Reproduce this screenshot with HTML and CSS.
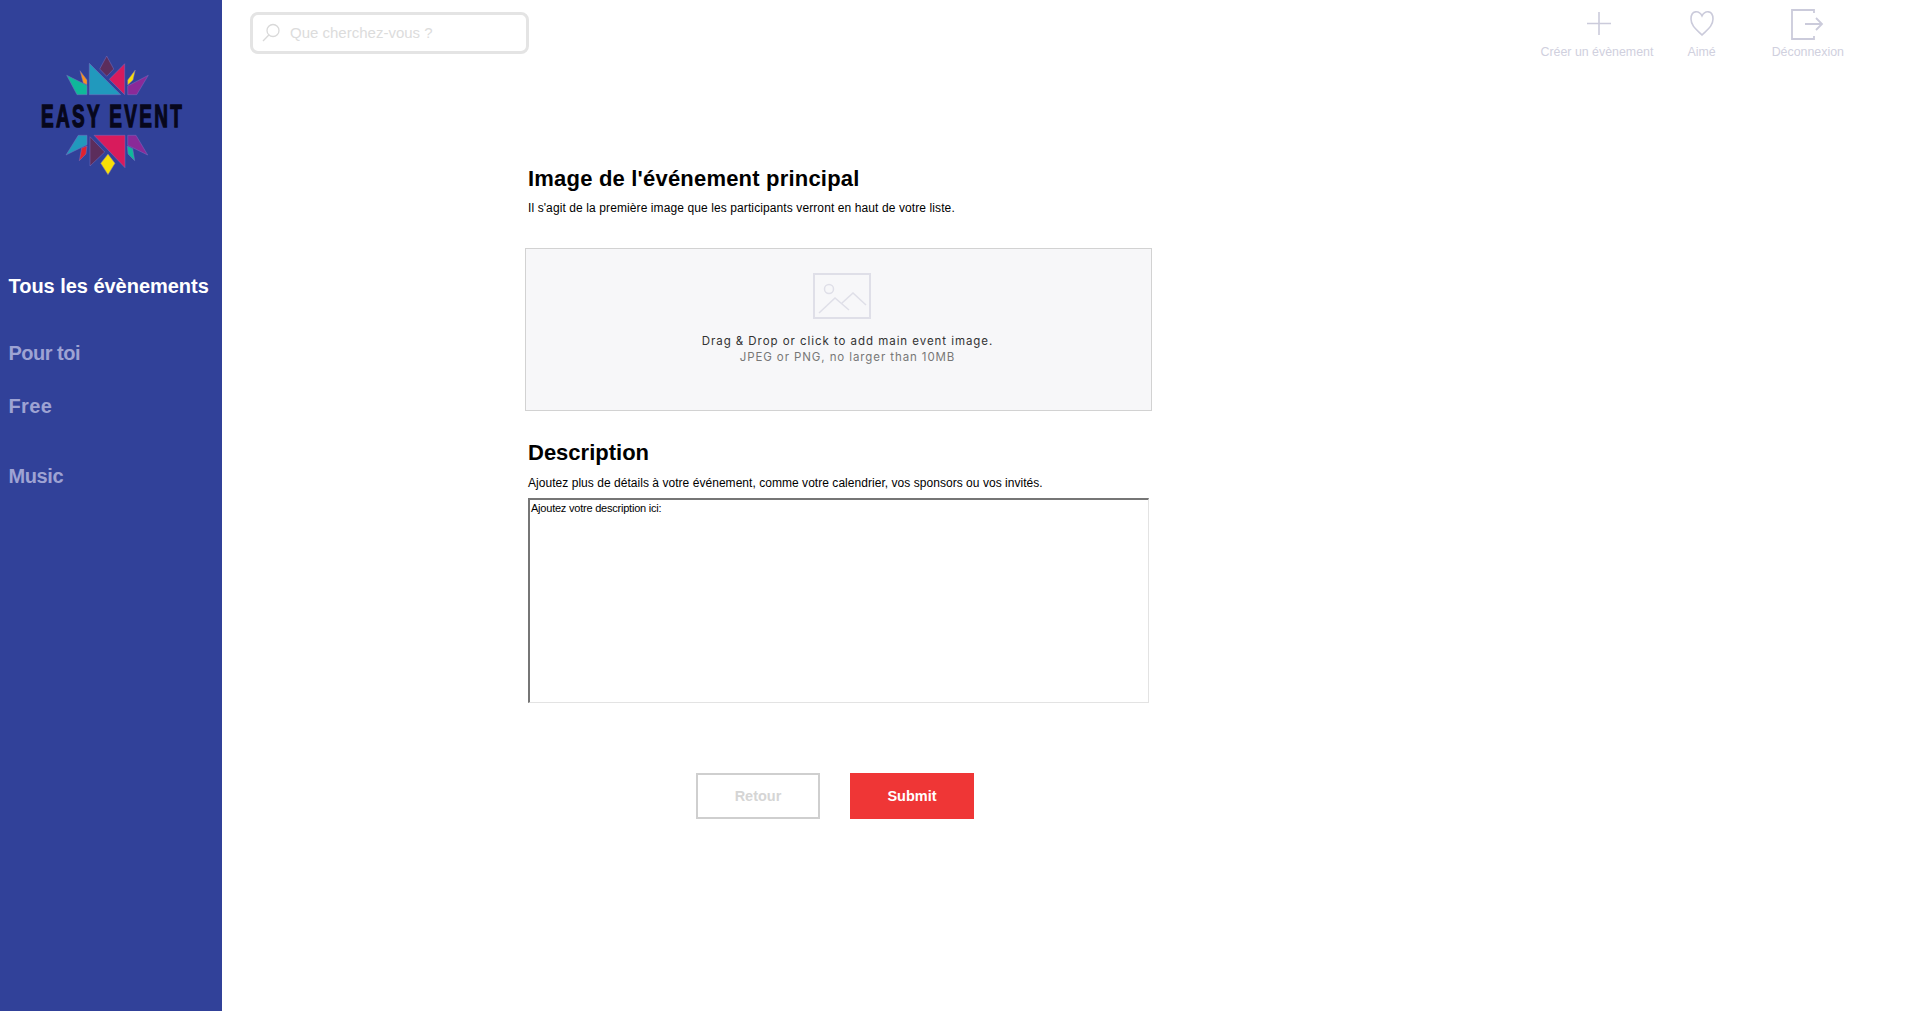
FILE: index.html
```html
<!DOCTYPE html>
<html lang="fr">
<head>
    <meta charset="UTF-8">
    <meta name="viewport" content="width=device-width, initial-scale=1.0">
    <title>Easy Event</title>
    <link rel="stylesheet" href="styles.css">
</head>
<body>
    <aside class="sidebar">
        <svg class="logo" width="222" height="190" viewBox="0 0 222 190">
            <polygon fill="#5c2d5c" points="106.7,56 113.7,69 106.7,76.3 99.7,69"/>
            <polygon fill="#2199bd" points="89.3,63.3 120.7,94.7 89.3,94.7"/>
            <polygon fill="#d81b5c" points="124.7,63.7 124.7,94.7 109.3,79.3"/>
            <polygon fill="#0fb89a" points="66.7,75.3 87,85.3 87,94.7 77,94.7"/>
            <polygon fill="#f7931e" points="80,70.7 87,80 87,84.7 83.3,83"/>
            <polygon fill="#f8e007" points="135.3,70 127.7,80 127.7,85 133,80"/>
            <polygon fill="#8a2a98" points="148.3,75.3 127.7,86 127.7,94.7 136.7,94.7"/>
            <text class="logo-text" transform="translate(41 126.5) scale(0.592 1)">EASY EVENT</text>
            <polygon fill="#2199bd" points="87,135.3 78.3,135.3 66,155 87,144.7"/>
            <polygon fill="#e0222f" points="87,146 81.7,148 79.3,160.7 86,154"/>
            <polygon fill="#5c2d5c" points="90,136.7 104.7,152 90,166"/>
            <polygon fill="#d81b5c" points="94,135.3 125,135.3 125,167.7"/>
            <polygon fill="#f8e007" points="108,154 115,163.3 108,174.7 100.7,163.3"/>
            <polygon fill="#0fb89a" points="127.3,146 132.7,148.7 134.7,160.7 128,154"/>
            <polygon fill="#8a2a98" points="127.7,135.3 136,135.3 147.7,155 127.7,145.3"/>
        </svg>
        <nav class="nav">
            <a class="nav-item active">Tous les évènements</a>
            <a class="nav-item pour">Pour toi</a>
            <a class="nav-item free">Free</a>
            <a class="nav-item music">Music</a>
        </nav>
    </aside>

    <div class="main">
        <header class="topbar">
            <div class="search">
                <svg width="19" height="19" viewBox="0 0 19 19" fill="none" stroke="#d9d9d9" stroke-width="1.3">
                    <circle cx="11" cy="7.5" r="6"/>
                    <path d="M6.8 12 1 18"/>
                </svg>
                <input type="text" placeholder="Que cherchez-vous ?">
            </div>
            <div class="actions">
                <a class="action">
                    <svg width="30" height="34" viewBox="0 0 30 34" fill="none" stroke="#cbcbdb" stroke-width="1.6">
                        <path d="M17 4V27M5 15.5H29"/>
                    </svg>
                    <span>Créer un évènement</span>
                </a>
                <a class="action">
                    <svg width="26" height="34" viewBox="0 0 26 34" fill="none" stroke="#cbcbdb" stroke-width="1.6">
                        <path d="M13 27C8 22 2 18 2 11C2 2 10 2 13 8C16 2 24 2 24 11C24 18 18 22 13 27Z"/>
                    </svg>
                    <span>Aimé</span>
                </a>
                <a class="action logout">
                    <svg width="34" height="34" viewBox="0 0 34 34" fill="none" stroke="#cbcbdb" stroke-width="1.8">
                        <path d="M23 5V2H1V31H23V28"/>
                        <path d="M14 16H31M25 10L31 16L25 22"/>
                    </svg>
                    <span>Déconnexion</span>
                </a>
            </div>
        </header>

        <form class="event-form">
            <h2 class="image-title">Image de l'événement principal</h2>
            <p class="image-text">Il s'agit de la première image que les participants verront en haut de votre liste.</p>
            <div class="dropzone">
                <svg class="drop-icon" width="58" height="46" viewBox="0 0 58 46" fill="none" stroke="#dfdfe8" stroke-width="2">
                    <rect x="1" y="1" width="56" height="44"/>
                    <circle cx="16" cy="16" r="4.5" stroke-width="1.5"/>
                    <path d="M6 40 22 25 36 37M29 30 40 20 53 32" stroke-width="1.5"/>
                </svg>
                <div class="drop-title">Drag &amp; Drop or click to add main event image.</div>
                <div class="drop-hint">JPEG or PNG, no larger than 10MB</div>
            </div>
            <h2 class="desc-title">Description</h2>
            <p class="desc-text">Ajoutez plus de détails à votre événement, comme votre calendrier, vos sponsors ou vos invités.</p>
            <textarea>Ajoutez votre description ici:</textarea>
            <div class="buttons">
                <button type="button" class="btn-back">Retour</button>
                <button type="button" class="btn-submit">Submit</button>
            </div>
        </form>
    </div>
</body>
</html>
```

FILE: styles.css
```css
* {
    box-sizing: border-box;
}
body {
    margin: 0;
    height: 1011px;
    overflow: hidden;
    display: flex;
    font-family: "Liberation Sans", Arial, sans-serif;
    background-color: #fff;
}
.sidebar {
    width: 222px;
    flex-shrink: 0;
    background-color: #314199;
}
.logo {
    display: block;
}
.logo polygon {
    stroke: #7a6fc0;
    stroke-width: 0.5;
}
.logo-text {
    font-family: "Liberation Sans", Arial, sans-serif;
    font-weight: bold;
    font-size: 32px;
    letter-spacing: 4px;
    fill: #07071c;
    stroke: #07071c;
    stroke-width: 1.4;
}
.nav {
    display: flex;
    flex-direction: column;
    padding: 84px 0 0 8.5px;
}
.nav-item {
    font-size: 20px;
    font-weight: bold;
    line-height: 24px;
    color: #9ea3d3;
}
.nav-item.active {
    color: #fff;
    letter-spacing: -0.03px;
}
.nav-item.pour {
    margin-top: 43px;
    letter-spacing: -0.5px;
}
.nav-item.free {
    margin-top: 29px;
    letter-spacing: 0.4px;
}
.nav-item.music {
    margin-top: 46px;
    letter-spacing: -0.4px;
}
.main {
    flex: 1;
}
.topbar {
    display: flex;
    justify-content: space-between;
    padding: 8px 67px 0 28px;
    height: 166px;
}
.search {
    display: flex;
    align-items: center;
    gap: 9px;
    width: 279px;
    height: 42px;
    margin-top: 4px;
    padding-left: 9px;
    padding-bottom: 1px;
    border: 3px solid #e4e4e4;
    border-radius: 8px;
}
.search input {
    flex: 1;
    min-width: 0;
    border: none;
    outline: none;
    padding: 0;
    font-family: inherit;
    font-size: 15px;
}
.search input::placeholder {
    color: #dcdcdc;
    opacity: 1;
}
.actions {
    display: flex;
    align-items: flex-start;
    gap: 34px;
}
.action {
    display: flex;
    flex-direction: column;
    align-items: center;
    font-size: 12.4px;
    line-height: 14px;
    color: #d0d0de;
}
.action svg {
    display: block;
    margin-bottom: 3px;
}
.logout {
    margin-left: 22px;
}
.event-form {
    margin-left: 303px;
    width: 627px;
}
.event-form h2 {
    margin: 0;
    padding-left: 3px;
    font-size: 22px;
    line-height: 26px;
    color: #000;
}
.event-form .image-title {
    letter-spacing: 0.2px;
}
.event-form p {
    padding-left: 3px;
    font-size: 12px;
    line-height: 14px;
    color: #000;
}
.image-text {
    margin: 9px 0 0;
    letter-spacing: 0.1px;
}
.desc-text {
    margin: 10px 0 0;
    letter-spacing: 0.04px;
}
.dropzone {
    display: flex;
    flex-direction: column;
    align-items: center;
    height: 163px;
    margin-top: 33px;
    padding: 24px 0 0 18px;
    border: 1px solid #d2d2d2;
    background-color: #f7f7f9;
    font-family: "Inter", sans-serif;
}
.drop-icon {
    margin-right: 12px;
    flex-shrink: 0;
}
.drop-title {
    margin-top: 14px;
    font-size: 11.5px;
    line-height: 16px;
    letter-spacing: 0.95px;
    color: #333;
}
.drop-hint {
    font-size: 11.5px;
    line-height: 16px;
    letter-spacing: 0.9px;
    color: #777;
}
.event-form .desc-title {
    margin-top: 29px;
}
textarea {
    display: block;
    width: 621px;
    height: 205px;
    margin: 8px 0 0 3px;
    padding: 1px;
    resize: none;
    outline: none;
    border-style: solid;
    border-width: 2px 1px 1px 2px;
    border-color: #767676 #e3e3e3 #e3e3e3 #767676;
    font-family: inherit;
    font-size: 11px;
    line-height: 14px;
    letter-spacing: -0.22px;
    color: #000;
}
.buttons {
    display: flex;
    gap: 30px;
    margin: 70px 0 0 171px;
}
.buttons button {
    width: 124px;
    height: 46px;
    font-family: inherit;
    font-size: 14.5px;
    font-weight: bold;
    cursor: pointer;
}
.btn-back {
    background-color: #fff;
    border: 2px solid #cfcfcf;
    color: #d5d5d5;
}
.btn-submit {
    background-color: #ef3636;
    border: none;
    color: #fff;
}
```
